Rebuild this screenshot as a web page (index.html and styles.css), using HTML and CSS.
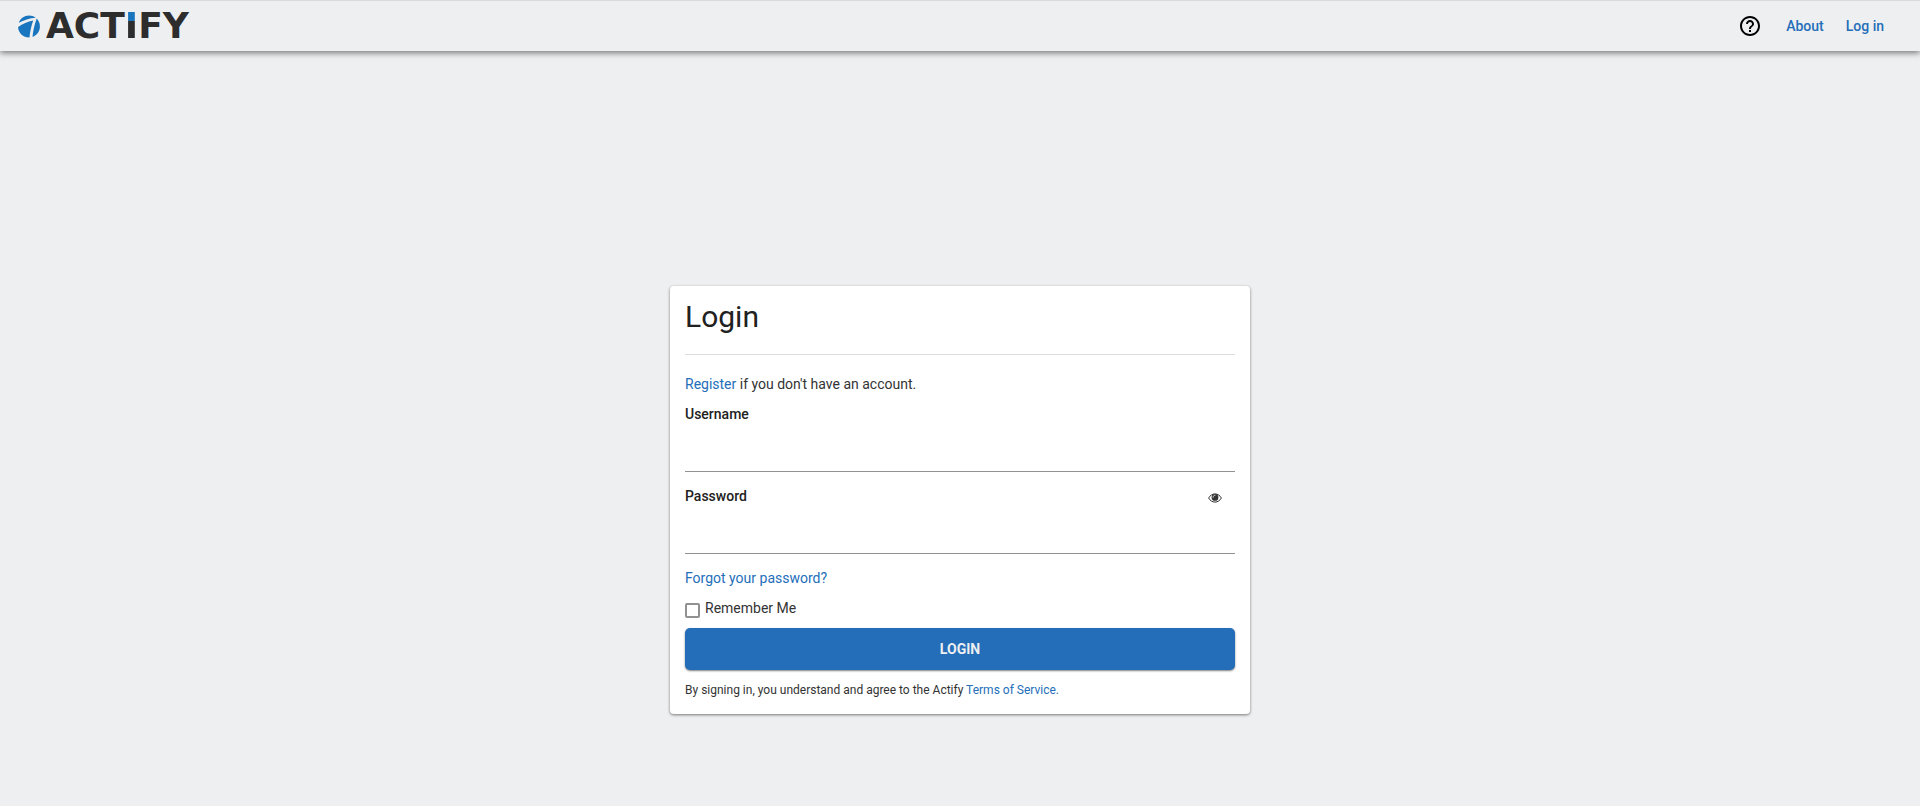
FILE: index.html
```html
<!DOCTYPE html>
<html lang="en">
<head>
    <meta charset="UTF-8">
    <meta name="viewport" content="width=device-width, initial-scale=1.0">
    <title>Login - Actify</title>
    <link rel="stylesheet" href="styles.css">
</head>
<body>
    <header class="navbar">
        <a class="brand" href="#">
            <svg class="brand-mark" viewBox="0 0 22 23" aria-hidden="true">
                <path fill="#1a75bf" d="M.8 7.800C2.300 3.500 6.300.5 11 .5c2.500 0 4.800.8 6.700 2.200C11.500 3.200 5.900 5 .8 7.800z"/>
                <path fill="#1a75bf" d="M.1 12C4.600 8.900 9.600 6.700 15.200 5.500 13.200 11 12 16.700 11.500 22.500 5.200 22.600.1 17.800.1 12z"/>
                <path fill="#1a75bf" d="M18.700 3.600c2 2 3.200 4.700 3.200 7.900 0 4.800-3 8.900-7.400 10.400.7-6.300 2-12.400 4.200-18.300z"/>
            </svg>
            <span class="brand-name">ACT<span class="brand-i">I</span>FY</span>
        </a>
        <nav class="nav-links">
            <a class="help" href="#" aria-label="Help">
                <svg viewBox="2 2 20 20" aria-hidden="true">
                    <path d="M11 18h2v-2h-2v2zm1-16C6.480 2 2 6.480 2 12s4.480 10 10 10 10-4.480 10-10S17.520 2 12 2zm0 18c-4.410 0-8-3.590-8-8s3.590-8 8-8 8 3.590 8 8-3.590 8-8 8zm0-14c-2.210 0-4 1.790-4 4h2c0-1.100.9-2 2-2s2 .9 2 2c0 2-3 1.750-3 5h2c0-2.250 3-2.500 3-5 0-2.210-1.790-4-4-4z"/>
                </svg>
            </a>
            <a href="#">About</a>
            <a href="#">Log in</a>
        </nav>
    </header>
    <main class="page">
        <form class="card">
            <h1>Login</h1>
            <p><a href="#">Register</a> if you don't have an account.</p>
            <div class="field">
                <label for="username">Username</label>
                <input type="text" id="username">
            </div>
            <div class="field">
                <div class="field-head">
                    <label for="password">Password</label>
                    <button type="button" class="show-password" aria-label="Show password">
                        <svg viewBox="0 0 14 10" aria-hidden="true">
                            <path fill="none" stroke="#333" d="M.6 5C2 2.500 4.300.9 7 .9S12 2.500 13.400 5C12 7.500 9.700 9.100 7 9.100S2 7.500.6 5z"/>
                            <circle cx="7" cy="4.400" r="3.400" fill="#333"/>
                            <path fill="none" stroke="#fff" stroke-width=".8" stroke-linecap="round" d="M5 4.300C5 3.100 5.900 2.300 7 2.300"/>
                        </svg>
                    </button>
                </div>
                <input type="password" id="password">
            </div>
            <p><a href="#">Forgot your password?</a></p>
            <div class="remember">
                <input type="checkbox" id="remember">
                <label for="remember">Remember Me</label>
            </div>
            <button type="submit" class="btn-login">LOGIN</button>
            <p class="terms">By signing in, you understand and agree to the Actify <a href="#">Terms of Service.</a></p>
        </form>
    </main>
</body>
</html>
```
FILE: styles.css
```css
* {
    box-sizing: border-box;
}
body {
    margin: 0;
    background-color: #eeeff1;
    font-family: Roboto, Arial, sans-serif;
    font-size: 14px;
    line-height: 20px;
    color: #333;
}
a {
    color: #246eb9;
    text-decoration: none;
}
.navbar {
    display: flex;
    justify-content: space-between;
    align-items: center;
    height: 51px;
    padding: 0 36px 0 18px;
    border-top: 1px solid #d9dadd;
    box-shadow: 0 2px 6px rgba(0, 0, 0, 0.5);
}
.brand {
    display: flex;
    align-items: center;
    gap: 6px;
}
.brand-mark {
    width: 22px;
    height: 23px;
}
.brand-name {
    font: bold 36px/36px "DejaVu Sans", sans-serif;
    color: #2d2d2d;
}
.brand-i {
    background: linear-gradient(#1a75bf 40%, #2d2d2d 40%);
    -webkit-background-clip: text;
    background-clip: text;
    color: transparent;
}
.nav-links {
    display: flex;
    align-items: center;
    gap: 22px;
    padding-bottom: 1px;
    font-weight: 500;
}
.help {
    display: flex;
    margin-right: 4px;
}
.help svg {
    width: 20px;
    height: 20px;
}
.page {
    padding: 235px 15px 30px;
}
.card {
    max-width: 580px;
    margin: 0 auto;
    padding: 14px 15px;
    background-color: #fff;
    border-radius: 4px;
    box-shadow: 0 1px 3px rgba(0, 0, 0, 0.5);
}
h1 {
    margin: 0 0 19px;
    padding-bottom: 21px;
    border-bottom: 1px solid #ddd;
    font-size: 30px;
    line-height: 33px;
    font-weight: 400;
    color: #212121;
}
p {
    margin: 0 0 10px;
}
.field {
    margin-bottom: 14px;
}
.field label {
    font-weight: 500;
    color: #212121;
}
.field-head {
    display: flex;
    justify-content: space-between;
}
.field input {
    display: block;
    width: 100%;
    height: 48px;
    padding: 6px 0;
    border: 0;
    border-bottom: 1px solid #919191;
    background: transparent;
    font: inherit;
    outline: none;
}
.show-password {
    display: flex;
    align-items: center;
    padding: 4px 13px 0;
    border: 0;
    background: none;
    cursor: pointer;
}
.show-password svg {
    width: 14px;
    height: 10px;
}
.remember {
    display: flex;
    align-items: flex-start;
    gap: 5px;
    margin-bottom: 10px;
}
.remember input {
    appearance: none;
    width: 15px;
    height: 15px;
    margin: 5px 0 0;
    border: 2px solid #919191;
    border-radius: 2px;
}
.btn-login {
    display: block;
    width: 100%;
    height: 42px;
    margin-bottom: 10px;
    border: 0;
    border-radius: 5px;
    background-color: #246eb9;
    box-shadow: 0 1px 2px rgba(0, 0, 0, 0.5);
    color: #eeeff1;
    font: 700 14px/20px Roboto, Arial, sans-serif;
    cursor: pointer;
}
.terms {
    margin: 0;
    font-size: 12px;
}
```
